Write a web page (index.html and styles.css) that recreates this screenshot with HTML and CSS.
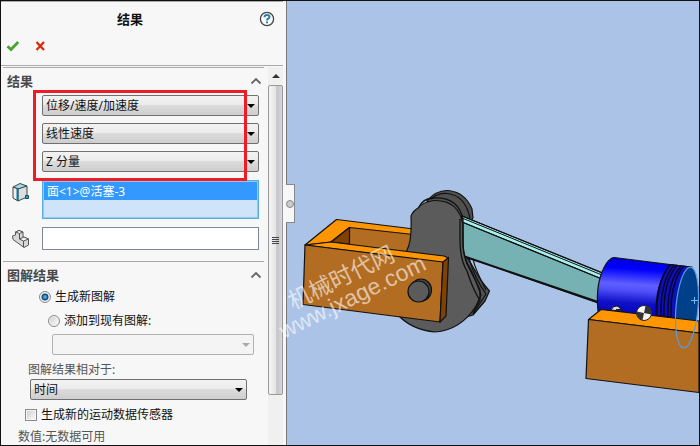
FILE: index.html
```html
<!DOCTYPE html>
<html lang="zh-CN">
<head>
<meta charset="utf-8">
<title>结果</title>
<link rel="stylesheet" href="styles.css">
</head>
<body>
<div class="app">
  <aside class="panel">
    <header class="panel-header">
      <div class="title-row">
        <h1>结果</h1>
        <button class="icon-button help" type="button" aria-label="帮助">
          <svg width="16" height="16" viewBox="0 0 16 16"><circle cx="8" cy="8" r="6.6" fill="#fafafa" stroke="#454545" stroke-width="1.3"/><path d="M5.6 6.2Q5.5 4 8 4Q10.500 4 10.500 5.900Q10.500 7 9.200 7.600Q8 8.200 8 9.400M8 10.500V12.300" fill="none" stroke="#287fa5" stroke-width="2"/></svg>
        </button>
      </div>
      <div class="actions">
        <button class="icon-button" type="button" aria-label="确定">
          <svg width="14" height="12" viewBox="0 0 14 12"><path d="M1.5 6.2L5 9.5L12.2 2" fill="none" stroke="#46a32d" stroke-width="2.7"/></svg>
        </button>
        <button class="icon-button" type="button" aria-label="取消">
          <svg width="14" height="12" viewBox="0 0 14 12"><path d="M2.500 2L10 10M10 2L2.500 10" fill="none" stroke="#d62a05" stroke-width="2.2"/></svg>
        </button>
      </div>
    </header>

    <div class="panel-body">
      <div class="sections">
        <section class="section">
          <div class="section-head">
            <h2>结果</h2>
            <button class="icon-button" type="button" aria-label="折叠结果"><svg width="12" height="8" viewBox="0 0 12 8"><path d="M1.5 6.5L6 2L10.5 6.5" fill="none" stroke="#666" stroke-width="1.8"/></svg></button>
          </div>
          <div class="fields">
            <div class="choices">
              <span class="combo"><select aria-label="类别"><option>位移/速度/加速度</option></select></span>
              <span class="combo"><select aria-label="子类别"><option>线性速度</option></select></span>
              <span class="combo"><select aria-label="分量"><option>Z 分量</option></select></span>
              <div class="highlight"></div>
            </div>
            <div class="pick-row">
              <svg class="pick-icon" width="20" height="20" viewBox="0 0 20 20"><path d="M2 5L9 1.500L16 4L8 7Z" fill="#9cdcee" stroke="#444"/><path d="M2 5L7 7V19L2 16Z" fill="#eee" stroke="#444"/><path d="M7 7L16 4V15L7 19Z" fill="#ddd" stroke="#444"/><path d="M6.500 7V18.500" stroke="#087b9f" stroke-width="2"/><path d="M14.500 13.500H17.500V16.500H14.500Z" fill="#28a4c8" stroke="#07506d"/></svg>
              <select class="selection-list" size="2" aria-label="所选面"><option selected>面&lt;1&gt;@活塞-3</option></select>
            </div>
            <div class="pick-row">
              <svg class="pick-icon" width="20" height="20" viewBox="0 0 20 20"><g stroke="#555" stroke-linejoin="round"><path d="M1.500 7L4.500 6V3L8 1.500L12 3V8L17.500 10V16L13 18.500L2 10.500Z" fill="#d8d8d8"/><path d="M4.500 3L8.500 4.500L12 3L8 1.500Z" fill="#fff"/><path d="M8.500 4.500V10L12.500 12L17.500 10L13 8L8.500 10" fill="#f5f5f5"/><path d="M12.500 12V18" fill="none"/></g></svg>
              <input class="component" type="text" aria-label="零部件">
            </div>
          </div>
        </section>

        <section class="section">
          <div class="section-head">
            <h2>图解结果</h2>
            <button class="icon-button" type="button" aria-label="折叠图解结果"><svg width="12" height="8" viewBox="0 0 12 8"><path d="M1.500 6.500L6 2L10.500 6.500" fill="none" stroke="#666" stroke-width="1.800"/></svg></button>
          </div>
          <label class="option new-plot"><input type="radio" name="plot" checked>生成新图解</label>
          <label class="option add-plot"><input type="radio" name="plot">添加到现有图解:</label>
          <span class="combo existing"><select disabled aria-label="现有图解"><option></option></select></span>
          <label class="versus-label" for="versus">图解结果相对于:</label>
          <span class="combo versus"><select id="versus"><option>时间</option></select></span>
          <label class="option sensor"><input type="checkbox">生成新的运动数据传感器</label>
          <p class="value">数值:无数据可用</p>
        </section>
      </div>
      <div class="scrollbar">
        <div class="scroll-up"></div>
        <div class="thumb"><i></i><i></i><i></i><i></i></div>
      </div>
    </div>
  </aside>

  <main class="viewport">
    <svg class="scene" viewBox="287 1 412 444" preserveAspectRatio="xMinYMin slice" role="img" aria-label="曲柄活塞机构">
      <defs>
        <linearGradient id="piston" x1="0.55" y1="0" x2="0.45" y2="1">
          <stop offset="0" stop-color="#0000d0"/><stop offset=".2" stop-color="#0000ff"/><stop offset=".45" stop-color="#5f5fff"/><stop offset=".55" stop-color="#5050fa"/><stop offset=".75" stop-color="#1010c8"/><stop offset="1" stop-color="#0000b0"/>
        </linearGradient>
      </defs>
      <g stroke="#111" stroke-width="1.2" stroke-linejoin="round">
        <!-- rear crank web -->
        <path d="M427 201Q436 190 448 190.500Q465 192 472 209L473 218L468 225L466 256Q471 263 476 272Q480 280 489.500 291L485 301L473 315L450 322L430 210Z" fill="#505050"/>
        <path d="M431 199Q438 193 447 193.500Q465 195 470 218M469 258Q474 277 486 294L473 314M473 259Q475 269 486 290" fill="none"/>
        <!-- connecting rod -->
        <path d="M462 216L602 275L598 303L463 256Z" fill="#76b2b3"/>
        <path d="M462 216L603 273L602 279L462 222Z" fill="#a9efed"/>
        <path d="M462 216L602 273M462 218L602 275M462 222L602 279" fill="none" stroke-width="1"/>
        <path d="M463 256L598 302" fill="none" stroke-width="2"/>
        <!-- bracket rear arm -->
        <path d="M305 245L336.500 219.500L418 229.500L415 254L350 245L331 242Z" fill="#ff9500"/>
        <path d="M331 242L349.500 227.500L418 235V255Z" fill="#b36d22"/>
        <path d="M331 242L349.500 227.500V244Z" fill="#7f4200"/>
        <!-- front crank web -->
        <path d="M418 208Q423 202 434 200.500Q459 200 463 225V245Q464 260 470 270Q477 282 481 295L476 306Q461 330 435 332Q412 330 398 315L407 250Q412 241 411 216Q413 211 418 208Z" fill="#5b5b5b"/>
        <path d="M419 207Q423 199 432 198Q458 196 463 219V245Q464 260 471 270Q476 282 480 290L480 300L473 313M460 219V240Q460 260 467 271Q472 287 479 299" fill="none" stroke-width="1.300"/>
        <!-- bracket front arm -->
        <path d="M305 245L331 242L444 256L448.500 258L443 263Z" fill="#ff9500"/>
        <path d="M305 245L443 262L440 322L303 304.500Z" fill="#b36d22"/>
        <path d="M443 262L448.500 257.500L446 316L440 322Z" fill="#7f4200"/>
        <ellipse cx="421" cy="290" rx="10.500" ry="11" fill="#484848"/>
        <circle cx="418.500" cy="291.500" r="10.500" fill="#5b5b5b"/>
        <!-- piston and liner -->
        <path d="M614 257.500L690 267L679 319L598 311Q595 282 606 264Q610 258 614 257.500Z" fill="url(#piston)"/>
        <path d="M670 264.500L692 267L681 318L656 315.500Q655 284 670 264.500Z" fill="#1010b8"/>
        <path d="M670 265Q656 282 657 315M674 265Q660 282 661 316M677 265Q663 282 664 316M681 266Q667 282 668 317M684 266Q670 282 671 317" fill="none" stroke="#050530" stroke-width="1.500"/>
        <ellipse cx="687" cy="307.500" rx="11" ry="40.500" transform="rotate(5 687 307.500)" fill="#003f89" stroke="none"/>
        <path d="M588.500 319.500L601 309.500L699 321V333Z" fill="#ff9500"/>
        <path d="M588.500 319.500L699 333V392.500L586 378.500Z" fill="#b36d22"/>
      </g>
      <ellipse cx="687" cy="307.500" rx="11" ry="40.500" transform="rotate(5 687 307.500)" fill="none" stroke="#4f9fe6" stroke-width="1.200"/>
      <path d="M694.500 297V304M691 300.500H698" stroke="#6fb8f4"/>
      <path d="M611 310Q613 305.500 617 306Q621 307 621 311Z" fill="#ddd" stroke="#111"/><path d="M616 309H620V311H616Z" fill="#222"/>
      <circle cx="644" cy="313" r="7.500" fill="#f5f5f5" stroke="#222"/>
      <path d="M644 313L645.500 305.700A7.500 7.500 0 0 1 651.300 314.500ZM644 313L642.500 320.300A7.500 7.500 0 0 1 636.700 311.500Z" fill="#333"/>
      <g class="watermark" fill="#fff" fill-opacity=".6">
        <text x="293" y="310" font-size="23" transform="rotate(-26 293 310)">机械时代网</text>
        <text x="284" y="339" font-size="23" transform="rotate(-26 284 339)">www.jxage.com</text>
      </g>
    </svg>
    <button class="splitter" type="button" aria-label="收起面板"></button>
  </main>
</div>
</body>
</html>
```
FILE: styles.css
```css
* { box-sizing: border-box; }

body {
  margin: 0;
  color: #111;
  font: 12px/16px "Noto Sans", "Noto Sans CJK SC", sans-serif;
}

h1, h2, p { margin: 0; }
h1, h2 { font-size: 13px; line-height: 16px; }
h2 { color: #484848; }
svg { display: block; }

.app {
  display: flex;
  height: 100vh;
  border: 1px solid #111;
  background: #f7f7f7;
}

.panel {
  display: flex;
  flex: 0 0 286px;
  flex-direction: column;
  border-right: 1px solid #777;
  padding-right: 3px;
}

.panel-header {
  border-top: 1px solid #aaa;
  border-bottom: 1px solid #aaa;
}

.title-row {
  display: grid;
  grid-template-columns: 1fr auto 1fr;
  align-items: center;
  height: 34px;
  padding: 0 8px;
}

.title-row h1 { grid-column: 2; margin-left: -24px; }
.title-row .help { justify-self: end; }

.actions {
  display: flex;
  gap: 14px;
  padding: 4px 5px 13px;
}

.icon-button {
  border: 0;
  padding: 0;
  background: none;
}

.panel-body {
  display: flex;
  flex: 1;
  min-height: 0;
  padding-top: 1px;
}

.sections {
  flex: 1;
  min-width: 0;
  overflow: hidden;
  padding: 0 4px 0 2px;
}

.section {
  display: flex;
  flex-direction: column;
  border-top: 1px solid #aaa;
  padding-bottom: 11px;
}

.section:last-child { padding-bottom: 0; }

.section-head {
  display: flex;
  flex: none;
  justify-content: space-between;
  align-items: center;
  height: 27px;
  padding: 0 2px 2px 4px;
}

.fields {
  display: flex;
  flex-direction: column;
  gap: 8px;
  margin-right: 5px;
}

.choices {
  position: relative;
  display: flex;
  flex-direction: column;
  gap: 7px;
  margin-left: 39px;
}

.highlight {
  position: absolute;
  inset: -5px 12px -9px -9px;
  z-index: 1;
  border: 3px solid #ee1c25;
  pointer-events: none;
}

.combo {
  position: relative;
  display: block;
}

.combo::after {
  content: "";
  position: absolute;
  top: 9px;
  right: 4px;
  border: 4px solid transparent;
  border-top-color: #000;
  border-bottom: 0;
  pointer-events: none;
}

.combo select {
  display: block;
  width: 100%;
  height: 21px;
  appearance: none;
  border: 1px solid #707070;
  border-radius: 2px;
  padding: 0 20px 0 3px;
  color: #111;
  font: inherit;
  background: linear-gradient(#f3f3f3, #ebebeb 50%, #dcdcdc 50%, #cecece);
}

.combo select:disabled {
  border-color: #adb2b5;
  opacity: 1;
  background: #f4f4f4;
}

.pick-row { display: flex; }
.pick-icon { flex: none; margin: 2px 11px 0 8px; }

.selection-list, .component {
  flex: 1;
  min-width: 0;
  margin: 0;
  border-radius: 0;
  font: inherit;
}

.selection-list {
  height: 39px;
  overflow: hidden;
  border: 1px solid #55aee1;
  outline: 1px solid #91c9f2;
  outline-offset: -2px;
  padding: 1px;
  background: #cfe4f9;
}

.selection-list option {
  min-height: 17px;
  padding: 0 3px;
  line-height: 17px;
}

.selection-list option:checked {
  background: linear-gradient(#3399ff, #3399ff);
  -webkit-text-fill-color: #fff;
}

.component {
  height: 23px;
  border: 1px solid #7f879b;
  background: #fff;
}

.option {
  display: flex;
  align-items: center;
  gap: 4px;
}

.option input {
  flex: none;
  width: 12px;
  height: 12px;
  margin: 0;
  appearance: none;
  border: 1px solid #8b8b8b;
  background: linear-gradient(135deg, #c8cbd0, #fff);
  box-shadow: inset 0 0 0 1px #f4f4f4;
}

.option input[type="radio"] { border-radius: 50%; }

.option input[type="radio"]:checked {
  background: radial-gradient(circle, #3bb0e0 0 1px, #123e68 3px, #dde5ec 4px);
}

.new-plot { margin-left: 36px; }
.add-plot { margin: 8px 0 5px 45px; }
.existing { margin: 0 10px 7px 49px; }
.existing.combo::after { border-top-color: #aaa; }
.versus-label { margin: 0 0 1px 25px; color: #555; }
.versus { margin: 0 17px 7px 27px; }
.sensor { margin-left: 22px; }
.value { margin: 6px 0 0 15px; color: #555; }

.scrollbar {
  display: flex;
  flex: 0 0 15px;
  flex-direction: column;
  background: #f0f0f0;
}

.scroll-up {
  display: flow-root;
  flex: none;
  width: 8px;
  height: 18px;
  margin-left: 4px;
}

.scroll-up::before {
  content: "";
  display: block;
  margin-top: 7px;
  border: 4px solid transparent;
  border-top: 0;
  border-bottom-color: #333;
}

.thumb {
  display: flex;
  flex: 0 1 310px;
  flex-direction: column;
  justify-content: center;
  align-items: center;
  gap: 1px;
  margin-bottom: 50px;
  border: 1px solid #999;
  border-radius: 2px;
  background: linear-gradient(90deg, #f5f5f5, #e5e5e5 50%, #c4c4c9 60%, #d8d8db);
}

.thumb i {
  width: 7px;
  height: 1px;
  background: #444;
}

.viewport {
  position: relative;
  flex: 1;
  min-width: 0;
  background: #abc3e6;
}

.scene {
  width: 100%;
  height: 100%;
  overflow: visible;
}

.watermark { font-family: "Liberation Sans", "Noto Sans CJK SC", sans-serif; }

.splitter {
  position: absolute;
  top: 183px;
  left: -1px;
  display: grid;
  place-items: center;
  width: 9px;
  height: 39px;
  border: 1px solid #888;
  border-left: 0;
  padding: 0;
  background: #f7f7f7;
}

.splitter::before {
  content: "";
  width: 6px;
  height: 6px;
  border: 1px solid #888;
  border-radius: 50%;
  background: #ccc;
}
```
